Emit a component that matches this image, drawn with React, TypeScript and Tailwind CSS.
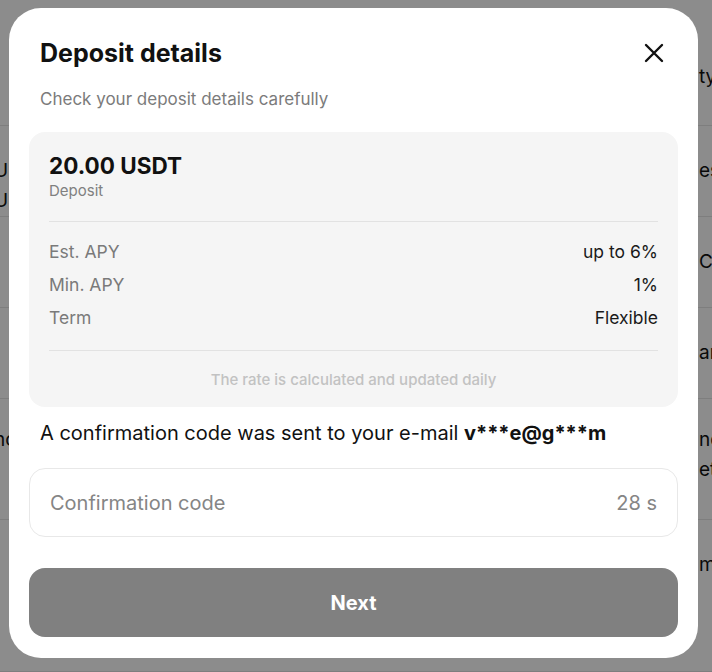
const bgRows = [
  { left: "", right: "ty", h: "h-[126px]", pad: "pt-[62px]" },
  { left: "U\nUS", right: "es", h: "h-[91px]", pad: "pt-[30px]" },
  { left: "", right: "C", h: "h-[91px]", pad: "pt-[30px]" },
  { left: "", right: "ar", h: "h-[91px]", pad: "pt-[30px]" },
  { left: "nc", right: "ne\nets", h: "h-[121px]", pad: "pt-[26px]" },
  { left: "", right: "m", h: "h-[152px]", pad: "pt-[30px]" },
]

function Background() {
  return (
    <div className="flex flex-col bg-white">
      {bgRows.map((r, i) => (
        <div key={i} className={`${r.h} ${r.pad} flex items-start justify-between border-b border-[#e6e6e6] text-[19px] leading-[30px] text-[#111] whitespace-pre`}>
          <span className="-ml-[6px]">{r.left}</span>
          <span className="w-[13px] shrink-0">{r.right}</span>
        </div>
      ))}
    </div>
  )
}

export default function App() {
  return (
    <div className="relative h-[672px] w-[712px] overflow-hidden font-['Inter',sans-serif]">
      <Background />

      <div className="absolute inset-0 bg-black/45">
        <div className="ml-[9px] mt-[8px] flex h-[650px] w-[689px] flex-col rounded-[32px] bg-white px-[20px] pt-[30px] pb-[21px]">

          <div className="flex items-center justify-between pl-[11px] pr-[14px]">
            <h2 className="text-[25px] font-bold leading-[30px] text-[#111]">Deposit details</h2>
            <svg width="20" height="20" viewBox="0 0 20 20" fill="none" stroke="#111" strokeWidth="2.4" strokeLinecap="round">
              <path d="M2 2L18 18M18 2L2 18" />
            </svg>
          </div>
          <p className="mt-[20px] pl-[11px] text-[17px] leading-[22px] text-[#7b7b7b]">Check your deposit details carefully</p>

          <div className="mt-[22px] rounded-[16px] bg-[#f5f5f5] px-[20px] pt-[20px] pb-[18px]">
            <p className="text-[22.5px] font-bold leading-[28px] text-[#111]">20.00 USDT</p>
            <p className="mt-[1px] text-[15px] leading-[20px] text-[#808080]">Deposit</p>

            <div className="mt-[20px] border-t border-[#e2e2e2]" />

            <div className="flex flex-col gap-[11px] pt-[19px] pb-[21px] text-[17.5px] leading-[22px]">
              <div className="flex justify-between">
                <span className="text-[#7a7a7a]">Est. APY</span>
                <span className="text-[#1a1a1a]">up to 6%</span>
              </div>
              <div className="flex justify-between">
                <span className="text-[#7a7a7a]">Min. APY</span>
                <span className="text-[#1a1a1a]">1%</span>
              </div>
              <div className="flex justify-between">
                <span className="text-[#7a7a7a]">Term</span>
                <span className="text-[#1a1a1a]">Flexible</span>
              </div>
            </div>

            <div className="border-t border-[#e2e2e2]" />
            <p className="mt-[20px] text-center text-[15px] font-medium leading-[18px] text-[#c2c2c2]">The rate is calculated and updated daily</p>
          </div>

          <p className="mt-[14px] pl-[11px] text-[20px] leading-[24px] text-[#111]">
            A confirmation code was sent to your e-mail <span className="font-bold">v***e@g***m</span>
          </p>

          <div className="mt-[23px] flex h-[69px] items-center justify-between rounded-[16px] border border-[#e8e8e8] px-[20px] text-[20px] text-[#858585]">
            <span>Confirmation code</span>
            <span>28 s</span>
          </div>

          <button className="mt-auto flex h-[69px] items-center justify-center rounded-[16px] bg-[#808080] text-[20px] font-bold text-white">
            Next
          </button>
        </div>
      </div>
    </div>
  )
}
